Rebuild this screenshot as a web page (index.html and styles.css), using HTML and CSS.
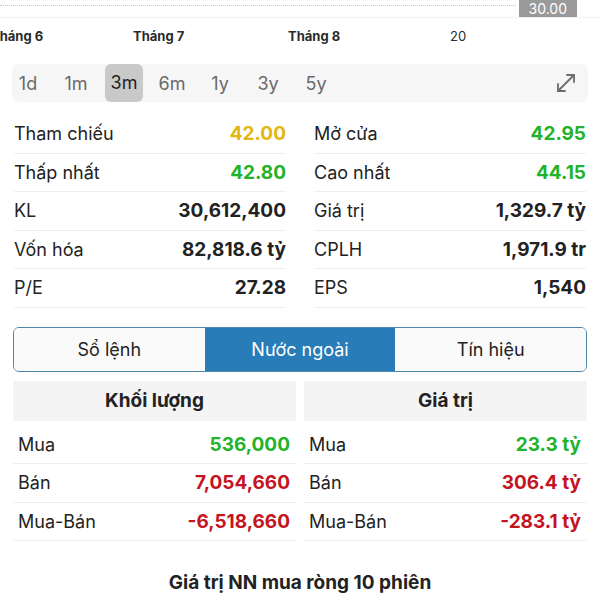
FILE: index.html
```html
<!DOCTYPE html>
<html lang="vi">
<head>
    <meta charset="UTF-8">
    <meta name="viewport" content="width=device-width, initial-scale=1.0">
    <title>Chi tiết cổ phiếu</title>
    <link rel="stylesheet" href="styles.css">
</head>
<body>

<div class="chart-edge">
    <div class="grid-line"></div>
    <span class="price-tag">30.00</span>
</div>
<div class="axis">
    <span class="tick" style="left: -9px;">Tháng 6</span>
    <span class="tick" style="left: 133px;">Tháng 7</span>
    <span class="tick" style="left: 288px;">Tháng 8</span>
    <span class="tick tick-year" style="left: 450px;">20</span>
</div>

<div class="periods">
    <span class="period">1d</span>
    <span class="period">1m</span>
    <span class="period active">3m</span>
    <span class="period">6m</span>
    <span class="period">1y</span>
    <span class="period">3y</span>
    <span class="period">5y</span>
    <svg class="expand" width="22" height="22" viewBox="0 0 22 22" fill="none" stroke="#6b6b6b" stroke-width="1.8" stroke-linecap="round" stroke-linejoin="round">
        <path d="M3 19 L19 3"/>
        <path d="M12 3 H19 V10"/>
        <path d="M3 12 V19 H10"/>
    </svg>
</div>

<div class="stats">
    <div class="col">
        <div class="row"><span>Tham chiếu</span><b class="ref">42.00</b></div>
        <div class="row"><span>Thấp nhất</span><b class="up">42.80</b></div>
        <div class="row"><span>KL</span><b>30,612,400</b></div>
        <div class="row"><span>Vốn hóa</span><b>82,818.6 tỷ</b></div>
        <div class="row"><span>P/E</span><b>27.28</b></div>
    </div>
    <div class="col">
        <div class="row"><span>Mở cửa</span><b class="up">42.95</b></div>
        <div class="row"><span>Cao nhất</span><b class="up">44.15</b></div>
        <div class="row"><span>Giá trị</span><b>1,329.7 tỷ</b></div>
        <div class="row"><span>CPLH</span><b>1,971.9 tr</b></div>
        <div class="row"><span>EPS</span><b>1,540</b></div>
    </div>
</div>

<div class="tabs">
    <div class="tab">Sổ lệnh</div>
    <div class="tab active">Nước ngoài</div>
    <div class="tab">Tín hiệu</div>
</div>

<div class="foreign">
    <div class="col">
        <div class="head">Khối lượng</div>
        <div class="row"><span>Mua</span><b class="up">536,000</b></div>
        <div class="row"><span>Bán</span><b class="down">7,054,660</b></div>
        <div class="row"><span>Mua-Bán</span><b class="down">-6,518,660</b></div>
    </div>
    <div class="col">
        <div class="head">Giá trị</div>
        <div class="row"><span>Mua</span><b class="up">23.3 tỷ</b></div>
        <div class="row"><span>Bán</span><b class="down">306.4 tỷ</b></div>
        <div class="row"><span>Mua-Bán</span><b class="down">-283.1 tỷ</b></div>
    </div>
</div>

<h2 class="section-title">Giá trị NN mua ròng 10 phiên</h2>

</body>
</html>
```

FILE: styles.css
```css
body {
    font-family: Inter, "Noto Sans", sans-serif;
    margin: 0;
    color: #222;
    background-color: #fff;
    overflow: hidden;
}
.chart-edge {
    display: flex;
    align-items: flex-start;
    height: 17px;
    border-bottom: 1px solid #f2f2f2;
}
.grid-line {
    flex: 1;
    margin-top: 5px;
    border-top: 1px dotted #c4c4c4;
}
.price-tag {
    background-color: #9a9a9a;
    color: #fff;
    font-size: 14px;
    line-height: 17px;
    padding: 0 10px;
    margin-left: 3px;
    margin-right: 23px;
}
.axis {
    position: relative;
    height: 38px;
}
.tick {
    position: absolute;
    top: 10px;
    font-size: 13px;
    font-weight: 700;
    color: #2a2a2a;
}
.tick-year {
    font-weight: 400;
}
.periods {
    display: flex;
    align-items: center;
    gap: 16px;
    margin: 8px 12px 0;
    padding: 0 11px 0 0;
    height: 38px;
    background-color: #f6f6f6;
    border-radius: 8px;
}
.period {
    font-size: 18px;
    color: #6a6a6a;
    width: 32px;
    text-align: center;
}
.period.active {
    width: 38px;
    margin: 0 -3px;
    background-color: #c9c9c9;
    color: #222;
    line-height: 38px;
    border-radius: 6px;
}
.expand {
    margin-left: auto;
}
.stats {
    display: grid;
    grid-template-columns: 1fr 1fr;
    gap: 28px;
    padding: 0 14px;
    margin-top: 13px;
}
.row {
    display: flex;
    justify-content: space-between;
    align-items: center;
    height: 37.5px;
    border-bottom: 1px solid #efefef;
    font-size: 18px;
}
.row b {
    font-size: 19px;
    font-weight: 700;
    color: #222;
}
.row b.ref {
    color: #e4b610;
}
.row b.up {
    color: #22b32a;
}
.row b.down {
    color: #c4141f;
}
.tabs {
    display: flex;
    margin: 19px 13px 0;
    border: 1px solid #4f86ab;
    border-radius: 6px;
    overflow: hidden;
}
.tab {
    flex: 1;
    height: 43px;
    line-height: 43px;
    text-align: center;
    font-size: 18px;
    color: #222;
    background-color: #fafafa;
}
.tab.active {
    background-color: #287cb8;
    color: #fff;
}
.foreign {
    display: grid;
    grid-template-columns: 1fr 1fr;
    gap: 8px;
    padding: 0 13px;
    margin-top: 9px;
}
.head {
    height: 40px;
    line-height: 40px;
    text-align: center;
    font-size: 19px;
    font-weight: 700;
    background-color: #f4f4f4;
    margin-bottom: 5px;
}
.foreign .row {
    height: 37.5px;
    padding: 0 6px 0 5px;
}
.section-title {
    text-align: center;
    font-size: 19px;
    font-weight: 700;
    margin: 30px 0 0;
}
```
